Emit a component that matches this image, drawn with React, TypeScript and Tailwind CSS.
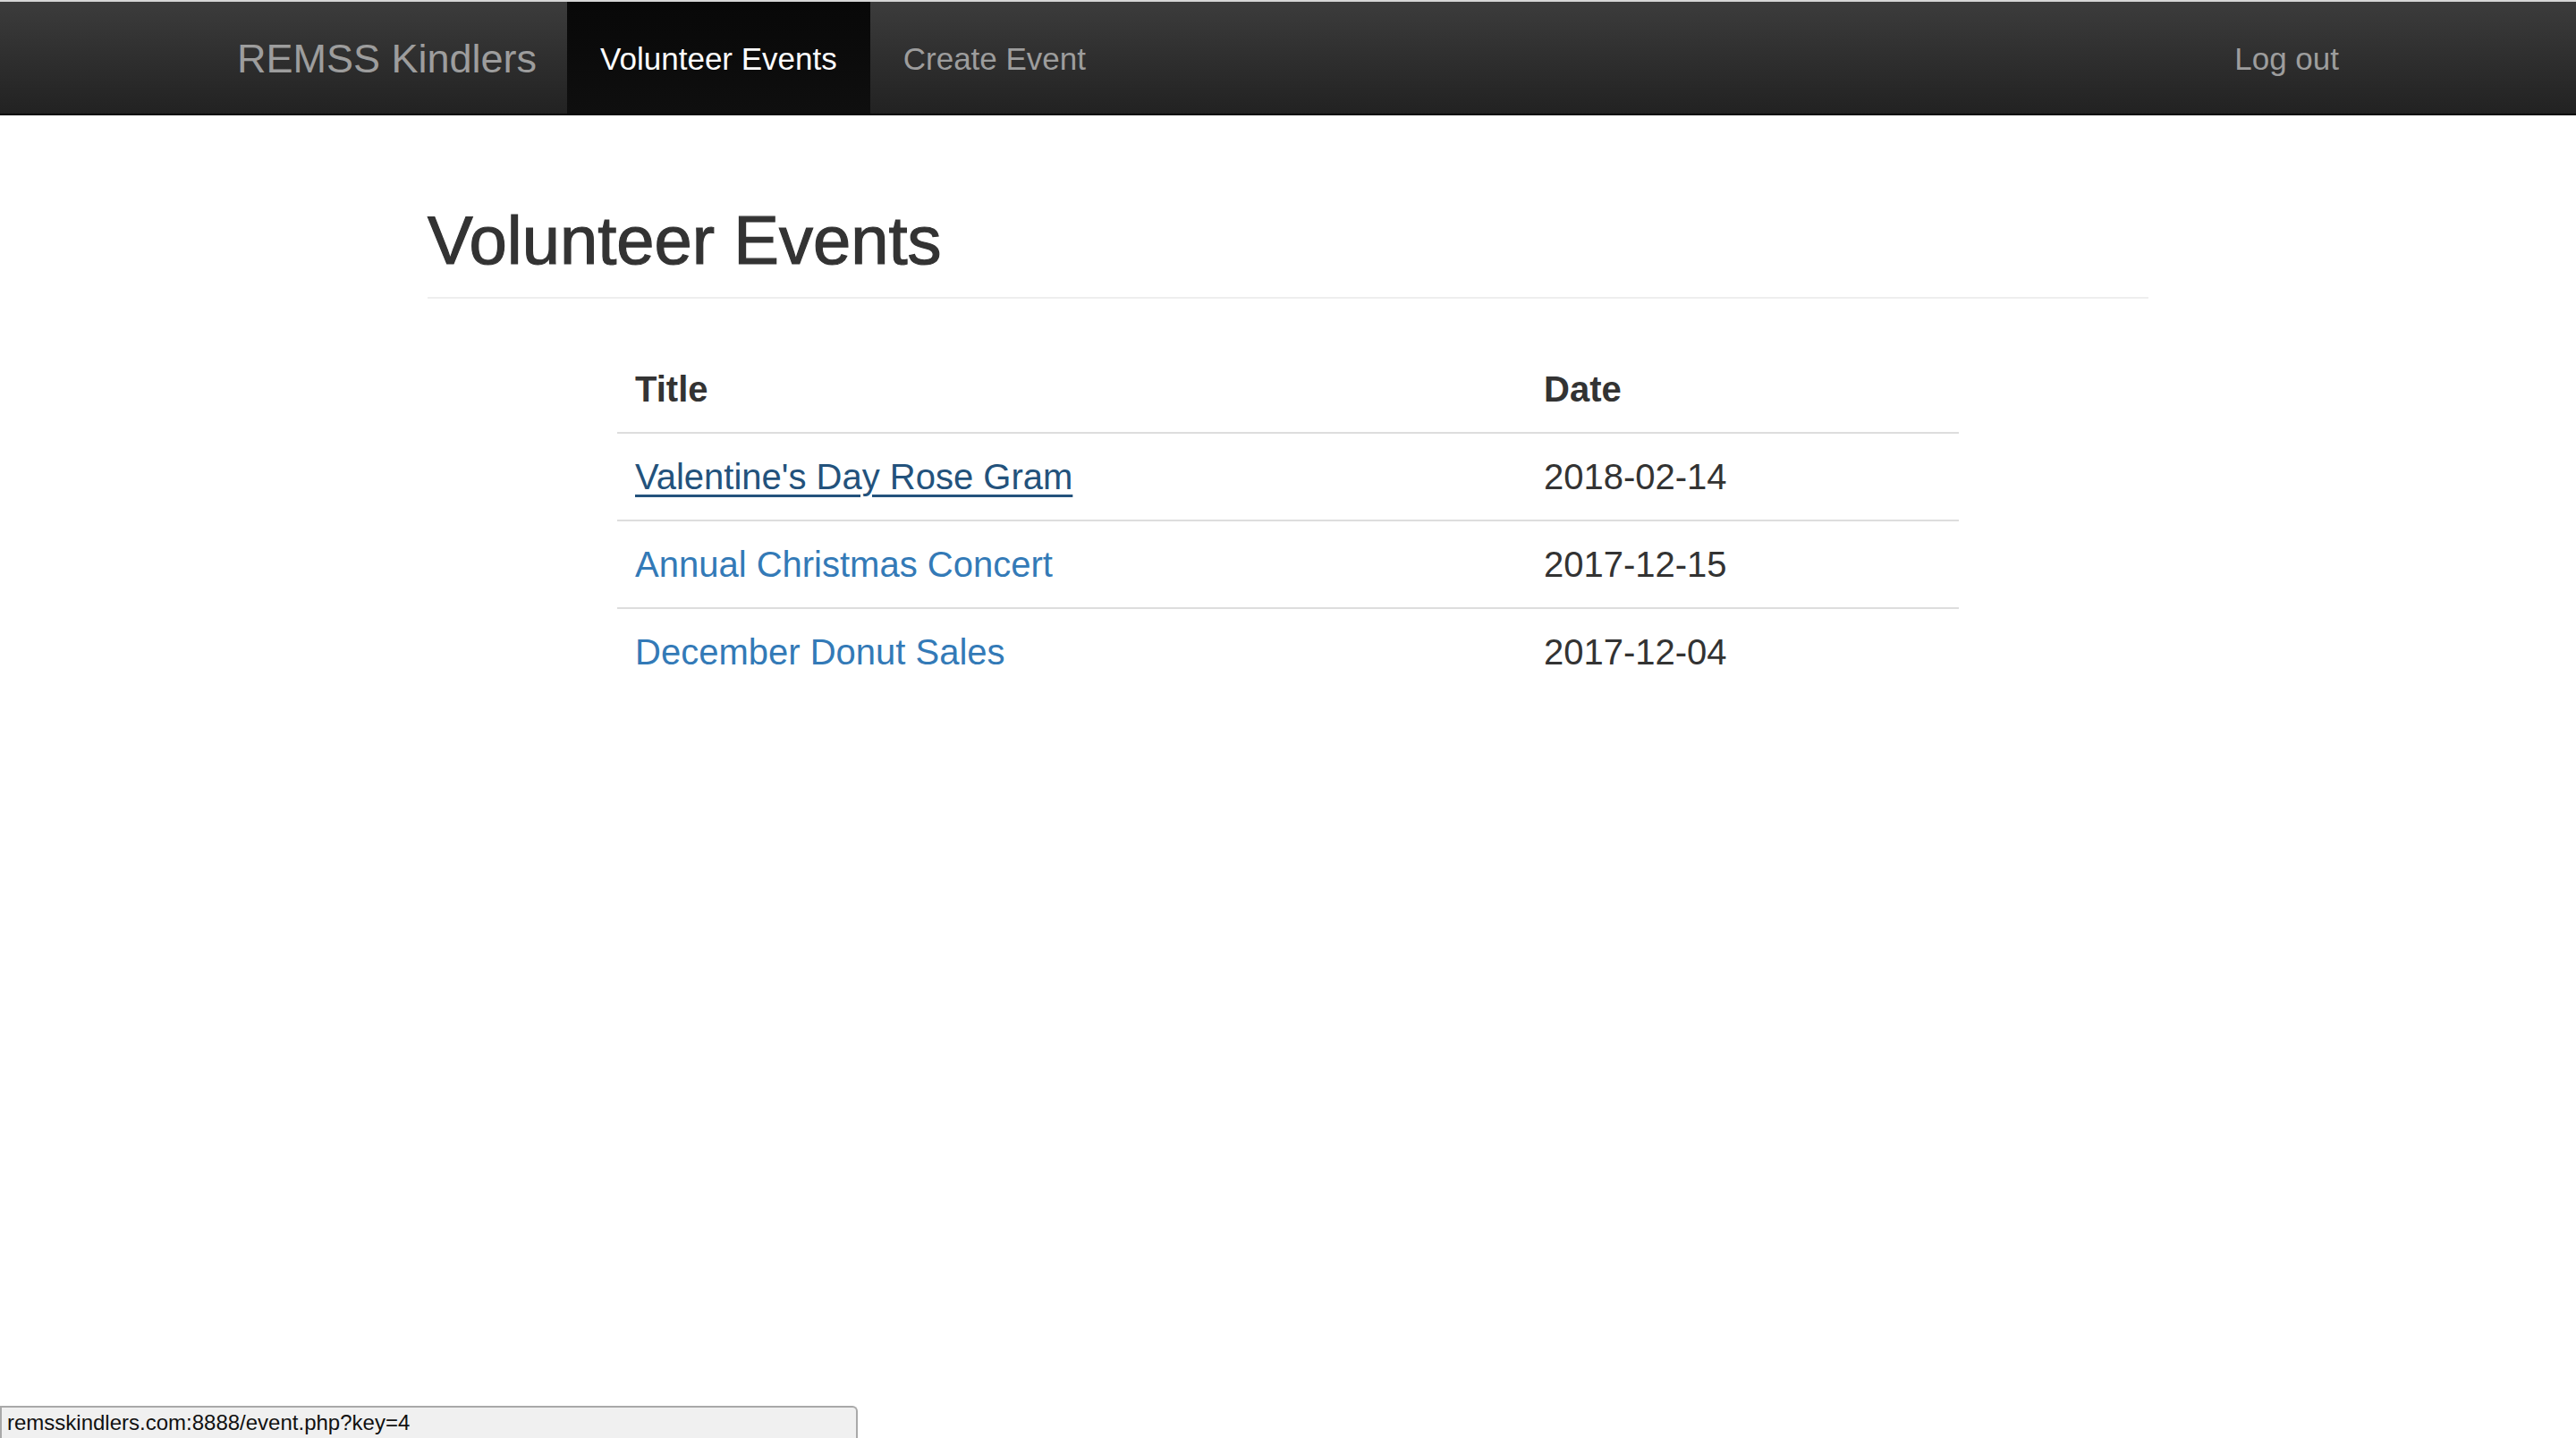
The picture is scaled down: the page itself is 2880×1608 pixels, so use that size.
import React from 'react';

const events = [
  { title: "Valentine's Day Rose Gram", date: '2018-02-14', active: true },
  { title: 'Annual Christmas Concert', date: '2017-12-15', active: false },
  { title: 'December Donut Sales', date: '2017-12-04', active: false },
];

const NavBar: React.FC = () => {
  return (
    <div>
      <div className="h-[2px] bg-[#d6d6d6]" />
      <nav className="h-[127px] bg-linear-to-b from-[#3c3c3c] to-[#222222] border-b-2 border-[#080808]">
        <div className="w-[2424px] mx-auto h-full flex items-stretch">
          <a className="flex items-center pl-[37px] pr-[34px] pt-[2px] text-[45px] leading-[50px] text-[#9d9d9d]">
            REMSS Kindlers
          </a>
          <a className="flex items-center px-[37px] pt-[2px] text-[35px] leading-[50px] text-white bg-linear-to-b from-[#080808] to-[#0f0f0f]">
            Volunteer Events
          </a>
          <a className="flex items-center px-[37px] pt-[2px] text-[35px] leading-[50px] text-[#9d9d9d]">
            Create Event
          </a>
          <a className="ml-auto flex items-center px-[37px] pt-[2px] text-[35px] leading-[50px] text-[#9d9d9d]">
            Log out
          </a>
        </div>
      </nav>
    </div>
  );
};

const App: React.FC = () => {
  return (
    <div className="relative min-h-screen bg-white text-[#333333] font-['Liberation_Sans',Arial,sans-serif]">
      <NavBar />

      <main className="w-[1924px] mx-auto pt-[99px]">
        <h2 className="text-[76px] leading-[82px] font-normal pb-[22px] border-b-2 border-[#eeeeee] [-webkit-text-stroke:1.2px_#333333]">
          Volunteer Events
        </h2>

        <table className="w-[1500px] mx-auto mt-[53px] border-collapse text-[40px] leading-[56px]">
          <thead>
            <tr>
              <th className="w-[1016px] text-left font-bold px-[20px] py-[20px] border-b-2 border-[#dddddd]">Title</th>
              <th className="text-left font-bold px-[20px] py-[20px] border-b-2 border-[#dddddd]">Date</th>
            </tr>
          </thead>
          <tbody>
            {events.map((ev) => (
              <tr key={ev.title}>
                <td className="px-[20px] py-[20px] border-t-2 border-[#dddddd]">
                  <a
                    className={
                      ev.active
                        ? 'text-[#23527c] underline underline-offset-[6px] decoration-[3px]'
                        : 'text-[#337ab7]'
                    }
                  >
                    {ev.title}
                  </a>
                </td>
                <td className="px-[20px] py-[20px] border-t-2 border-[#dddddd]">{ev.date}</td>
              </tr>
            ))}
          </tbody>
        </table>
      </main>

      {/* browser status bar */}
      <div className="fixed left-0 bottom-0 w-[959px] h-[36px] bg-[#f0f0f0] border-2 border-b-0 border-[#a9a9a9] rounded-tr-[6px] flex items-center pl-[6px] text-[24px] text-[#111] font-['Liberation_Sans',Arial,sans-serif]">
        remsskindlers.com:8888/event.php?key=4
      </div>
    </div>
  );
};

export default App;
